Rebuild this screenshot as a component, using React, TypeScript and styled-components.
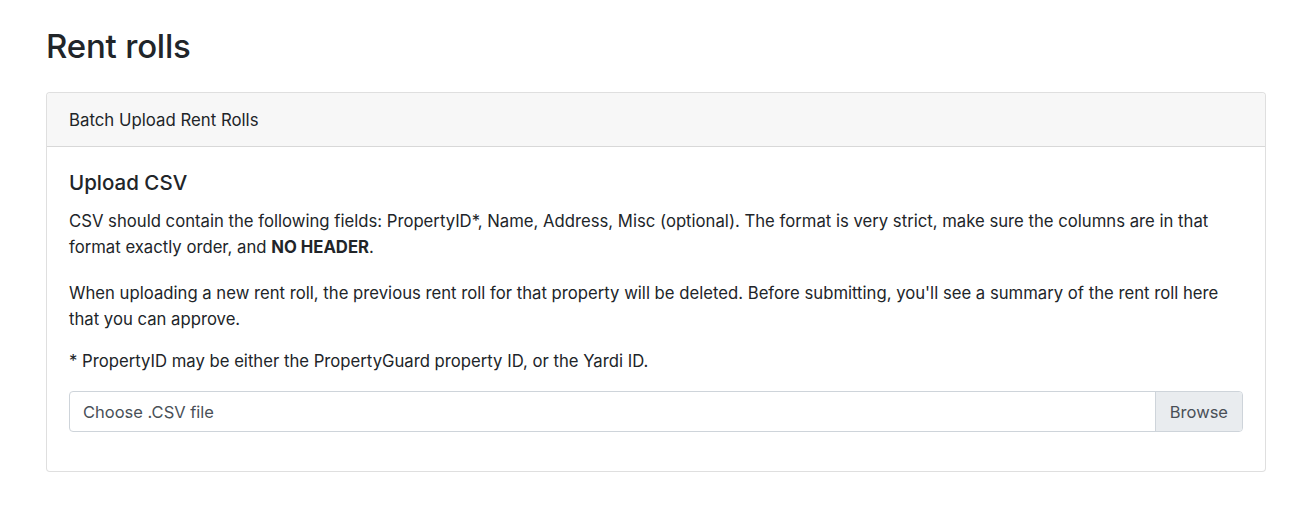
import React from 'react'
import styled, { createGlobalStyle } from 'styled-components'

const GlobalStyle = createGlobalStyle`
  html, body {
    margin: 0;
    padding: 0;
    background: #fff;
  }
  body {
    font-family: Inter, "Liberation Sans", Arial, sans-serif;
    color: #212529;
    -webkit-font-smoothing: antialiased;
  }
`

const Page = styled.div`
  padding: 27px 33px 40px 46px;
`

const PageTitle = styled.h2`
  font-size: 33px;
  font-weight: 500;
  line-height: 38px;
  margin: 0 0 27px;
  letter-spacing: -0.2px;
`

const Card = styled.div`
  border: 1px solid rgba(0, 0, 0, 0.125);
  border-radius: 4px;
  background: #fff;
`

const CardHeader = styled.div`
  background: #f7f7f7;
  border-bottom: 1px solid rgba(0, 0, 0, 0.125);
  border-radius: 4px 4px 0 0;
  padding: 14px 22px 13px;
  font-size: 16.8px;
  line-height: 26px;
`

const CardBody = styled.div`
  padding: 23px 22px 39px;
`

const SectionTitle = styled.h5`
  font-size: 20.5px;
  font-weight: 500;
  line-height: 26px;
  margin: 0 0 12px;
`

const Para = styled.p`
  font-size: 16.7px;
  line-height: 26px;
  margin: 0 0 ${(p: { gap?: number }) => p.gap ?? 20}px;
`

const FileInput = styled.label`
  display: flex;
  height: 41px;
  box-sizing: border-box;
  border: 1px solid #ced4da;
  border-radius: 4px;
  overflow: hidden;
  color: #495057;
  font-size: 16.5px;
  cursor: pointer;
`

const FileText = styled.span`
  flex: 1;
  display: flex;
  align-items: center;
  padding: 0 13px;
`

const BrowseButton = styled.span`
  display: flex;
  align-items: center;
  padding: 0 14px;
  background: #e9ecef;
  border-left: 1px solid #ced4da;
`

const App = () => {
  return (
    <Page>
      <GlobalStyle />
      <PageTitle>Rent rolls</PageTitle>
      <Card>
        <CardHeader>Batch Upload Rent Rolls</CardHeader>
        <CardBody>
          <SectionTitle>Upload CSV</SectionTitle>
          <Para>
            CSV should contain the following fields: PropertyID*, Name, Address, Misc (optional). The format is very
            strict, make sure the columns are in that format exactly order, and <b>NO HEADER</b>.
          </Para>
          <Para gap={16}>
            When uploading a new rent roll, the previous rent roll for that property will be deleted. Before
            submitting, you'll see a summary of the rent roll here that you can approve.
          </Para>
          <Para gap={17}>* PropertyID may be either the PropertyGuard property ID, or the Yardi ID.</Para>
          <FileInput>
            <FileText>Choose .CSV file</FileText>
            <BrowseButton>Browse</BrowseButton>
          </FileInput>
        </CardBody>
      </Card>
    </Page>
  )
}

export default App
